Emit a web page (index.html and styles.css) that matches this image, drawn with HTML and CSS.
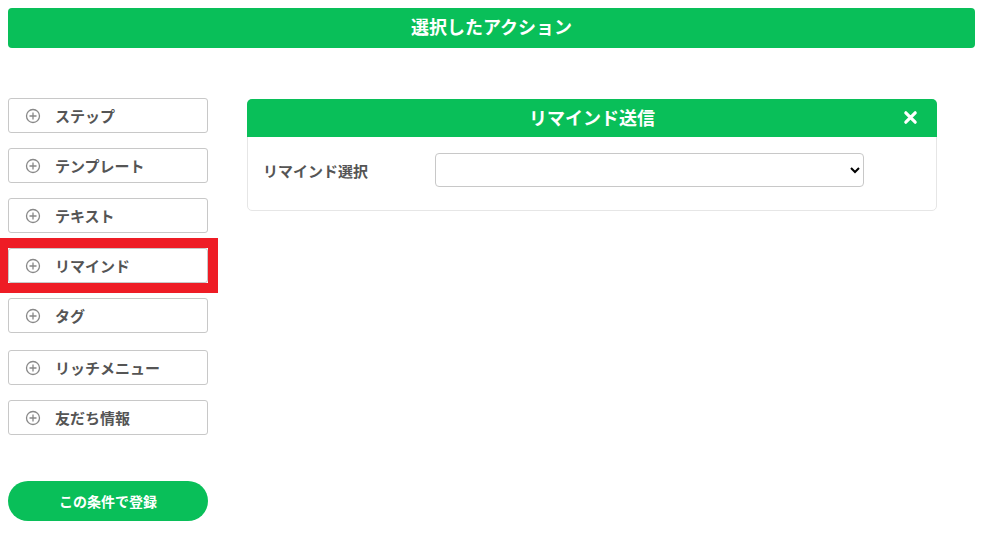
FILE: index.html
```html
<!DOCTYPE html>
<html lang="ja">
<head>
    <meta charset="UTF-8">
    <meta name="viewport" content="width=device-width, initial-scale=1.0">
    <title>選択したアクション</title>
    <link rel="stylesheet" href="styles.css">
</head>
<body>
    <div class="action-title">選択したアクション</div>

    <div class="action-layout">
        <div class="action-menu">
            <button class="menu-item" type="button">
                <svg class="plus-icon" viewBox="0 0 16 16"><circle cx="8" cy="8" r="6.5"/><path d="M8 4.5v7M4.5 8h7"/></svg>
                ステップ
            </button>
            <button class="menu-item" type="button">
                <svg class="plus-icon" viewBox="0 0 16 16"><circle cx="8" cy="8" r="6.5"/><path d="M8 4.5v7M4.5 8h7"/></svg>
                テンプレート
            </button>
            <button class="menu-item" type="button">
                <svg class="plus-icon" viewBox="0 0 16 16"><circle cx="8" cy="8" r="6.5"/><path d="M8 4.5v7M4.5 8h7"/></svg>
                テキスト
            </button>
            <div class="highlight">
                <button class="menu-item" type="button">
                    <svg class="plus-icon" viewBox="0 0 16 16"><circle cx="8" cy="8" r="6.5"/><path d="M8 4.5v7M4.5 8h7"/></svg>
                    リマインド
                </button>
            </div>
            <button class="menu-item" type="button">
                <svg class="plus-icon" viewBox="0 0 16 16"><circle cx="8" cy="8" r="6.5"/><path d="M8 4.5v7M4.5 8h7"/></svg>
                タグ
            </button>
            <button class="menu-item rich" type="button">
                <svg class="plus-icon" viewBox="0 0 16 16"><circle cx="8" cy="8" r="6.5"/><path d="M8 4.5v7M4.5 8h7"/></svg>
                リッチメニュー
            </button>
            <button class="menu-item" type="button">
                <svg class="plus-icon" viewBox="0 0 16 16"><circle cx="8" cy="8" r="6.5"/><path d="M8 4.5v7M4.5 8h7"/></svg>
                友だち情報
            </button>

            <button class="submit-btn" type="button">この条件で登録</button>
        </div>

        <div class="action-panel">
            <div class="panel-head">
                <span class="panel-title">リマインド送信</span>
                <svg class="close-icon" viewBox="0 0 16 16"><path d="M3 3l10 10M13 3L3 13"/></svg>
            </div>
            <div class="panel-body">
                <label class="field-label" for="remind">リマインド選択</label>
                <select class="field-select" id="remind">
                    <option></option>
                </select>
            </div>
        </div>
    </div>
</body>
</html>
```

FILE: styles.css
```css
body {
    font-family: "Noto Sans CJK JP", "Noto Sans", sans-serif;
    margin: 0;
    padding: 8px;
    color: #555;
    background: #fff;
}

.action-title {
    height: 40px;
    line-height: 37px;
    background: #09bf59;
    border-radius: 4px;
    color: #fff;
    font-size: 18px;
    font-weight: bold;
    text-align: center;
}

.action-layout {
    display: flex;
    align-items: flex-start;
    gap: 39px;
    margin-top: 50px;
}

.action-menu {
    width: 200px;
    display: flex;
    flex-direction: column;
    gap: 15px;
}

.menu-item {
    display: flex;
    align-items: center;
    width: 100%;
    height: 35px;
    padding: 0 0 0 16px;
    border: 1px solid #c8c8c8;
    border-radius: 3px;
    background: #fff;
    color: #555;
    font-family: inherit;
    font-size: 15px;
    font-weight: bold;
    text-align: left;
    cursor: pointer;
}

.menu-item.rich {
    margin-top: 2px;
}

/* red marker round the selected item */
.highlight {
    margin: -10px -10px -10px -8px;
    border: solid #ee1c25;
    border-width: 10px 10px 10px 8px;
}

.plus-icon {
    width: 16px;
    height: 16px;
    margin-right: 14px;
    fill: none;
    stroke: #888;
    stroke-width: 1.3;
}

.submit-btn {
    height: 40px;
    margin-top: 31px;
    border: none;
    border-radius: 20px;
    background: #09bf59;
    color: #fff;
    font-family: inherit;
    font-size: 14px;
    font-weight: bold;
    cursor: pointer;
}

.action-panel {
    width: 688px;
    margin-top: 1px;
    border: 1px solid #e6e6e6;
    border-radius: 5px;
}

.panel-head {
    position: relative;
    height: 38px;
    margin: -1px -1px 0;
    background: #09bf59;
    border-radius: 5px 5px 0 0;
    text-align: center;
}

.panel-title {
    line-height: 36px;
    color: #fff;
    font-size: 18px;
    font-weight: bold;
}

.close-icon {
    position: absolute;
    top: 11px;
    right: 19px;
    width: 15px;
    height: 15px;
    fill: none;
    stroke: #fff;
    stroke-width: 3.4;
    stroke-linecap: round;
}

.panel-body {
    display: flex;
    align-items: center;
    padding: 16px 15px 23px;
}

.field-label {
    width: 172px;
    font-size: 15px;
    font-weight: bold;
}

.field-select {
    width: 429px;
    height: 34px;
    border: 1px solid #c8c8c8;
    border-radius: 4px;
    background: #fff;
    font-family: inherit;
}
```
